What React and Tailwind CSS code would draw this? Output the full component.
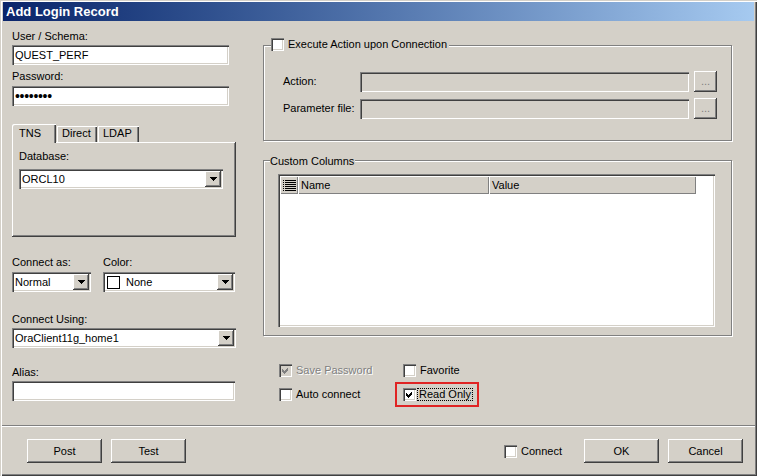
import React from 'react'

const sunken = 'shadow-[inset_1px_1px_0_#808080,inset_2px_2px_0_#404040,inset_-1px_-1px_0_#fff,inset_-2px_-2px_0_#d4d0c8]'
const raised = 'shadow-[inset_-1px_-1px_0_#404040,inset_1px_1px_0_#fff,inset_-2px_-2px_0_#808080]'

function Check({ checked, disabled }) {
  return (
    <div className={`w-[13px] h-[13px] shrink-0 ${disabled ? 'bg-[#d4d0c8]' : 'bg-white'} ${sunken}`}>
      {checked && (
        <svg width="13" height="13" viewBox="0 0 13 13" shapeRendering="crispEdges">
          <path d="M3 5 L5 7 L9 3 L9 6 L5 10 L3 8 Z" fill={disabled ? '#808080' : '#000'} />
        </svg>
      )}
    </div>
  )
}

function Arrow() {
  return (
    <div className={`w-[16px] h-[16px] shrink-0 bg-[#d4d0c8] flex items-center justify-center ${raised}`}>
      <svg width="7" height="4" viewBox="0 0 7 4" shapeRendering="crispEdges">
        <path d="M0 0 H7 V1 H6 V2 H5 V3 H4 V4 H3 V3 H2 V2 H1 V1 H0 Z" fill="#000" />
      </svg>
    </div>
  )
}

function Combo({ className = '', children }) {
  return (
    <div className={`flex items-center h-[20px] bg-white pl-[3px] pr-[2px] ${sunken} ${className}`}>
      <div className="flex-1 flex items-center whitespace-nowrap">{children}</div>
      <Arrow />
    </div>
  )
}

function Btn({ className = '', children }) {
  return (
    <div className={`h-[24px] w-[75px] flex items-center justify-center bg-[#d4d0c8] ${raised} ${className}`}>
      {children}
    </div>
  )
}

export default function App() {
  return (
    <div className="w-[757px] h-[476px] bg-[#d4d0c8] flex flex-col overflow-hidden text-[11px] leading-[13px] text-black font-[family-name:Liberation_Sans,Arial,sans-serif] shadow-[inset_1px_1px_0_#d4d0c8,inset_2px_2px_0_#fff,inset_-1px_-1px_0_#404040,inset_-2px_-2px_0_#808080]">
      {/* title bar */}
      <div className="mx-[3px] mt-[2px] h-[19px] flex items-center pl-[3px] bg-linear-to-r from-[#0a246a] to-[#a6caf0] text-white font-bold text-[13px] leading-[15px]">
        Add Login Record
      </div>

      <div className="flex h-[404px] pl-[12px]">
        {/* left column */}
        <div className="w-[224px] flex flex-col">
          <div className="mt-[9px]">User / Schema:</div>
          <div className={`mt-[2px] w-[217px] h-[20px] bg-white flex items-center pl-[3px] ${sunken}`}>QUEST_PERF</div>
          <div className="mt-[5px]">Password:</div>
          <div className={`mt-[3px] w-[217px] h-[20px] bg-white flex items-center pl-[3px] text-[14px] tracking-[-0.3px] ${sunken}`}>••••••••</div>

          <div className="mt-[18px] h-[18px] flex items-end">
            <div className="relative z-10 -mb-px w-[44px] h-[19px] pl-[7px] pt-[3px] bg-[#d4d0c8] shadow-[inset_1px_1px_0_#fff,inset_-1px_0_0_#404040,inset_-2px_0_0_#808080] rounded-tl-[2px]">TNS</div>
            <div className="w-[40px] h-[16px] ml-[1px] pl-[5px] pt-[1px] shadow-[inset_1px_1px_0_#fff,inset_-1px_0_0_#404040,inset_-2px_0_0_#808080]">Direct</div>
            <div className="w-[41px] h-[16px] ml-[1px] pl-[5px] pt-[1px] shadow-[inset_1px_1px_0_#fff,inset_-1px_0_0_#404040,inset_-2px_0_0_#808080]">LDAP</div>
          </div>
          <div className={`h-[95px] w-[224px] flex flex-col px-[7px] ${raised}`}>
            <div className="mt-[8px]">Database:</div>
            <Combo className="mt-[6px] w-[204px]">ORCL10</Combo>
          </div>

          <div className="mt-[19px] flex">
            <div className="w-[91px]">Connect as:</div>
            <div>Color:</div>
          </div>
          <div className="mt-[3px] flex">
            <Combo className="w-[79px]">Normal</Combo>
            <Combo className="ml-[12px] w-[132px]">
              <div className="w-[13px] h-[13px] border border-black bg-white ml-px" />
              <span className="ml-[6px]">None</span>
            </Combo>
          </div>

          <div className="mt-[21px]">Connect Using:</div>
          <Combo className="mt-[2px] w-[224px]">OraClient11g_home1</Combo>

          <div className="mt-[18px]">Alias:</div>
          <div className={`mt-[2px] w-[223px] h-[20px] bg-white ${sunken}`} />
        </div>

        {/* right column */}
        <div className="ml-[27px] w-[469px] flex flex-col">
          <div className="mt-[24px] h-[96px] border border-[#808080] shadow-[1px_1px_0_#fff,inset_1px_1px_0_#fff] flex flex-col">
            <div className="-mt-[8px] ml-[7px] self-start h-[13px] flex items-center bg-[#d4d0c8] pr-[2px]">
              <Check />
              <span className="ml-[4px]">Execute Action upon Connection</span>
            </div>
            <div className="mt-[20px] flex items-center h-[21px]">
              <div className="w-[96px] pl-[19px]">Action:</div>
              <div className={`w-[329px] h-[20px] bg-[#d4d0c8] ${sunken}`} />
              <div className={`ml-[5px] w-[23px] h-[21px] flex items-center justify-center text-[#808080] bg-[#d4d0c8] ${raised}`}>...</div>
            </div>
            <div className="mt-[6px] flex items-center h-[21px]">
              <div className="w-[96px] pl-[19px]">Parameter file:</div>
              <div className={`w-[329px] h-[20px] bg-[#d4d0c8] ${sunken}`} />
              <div className={`ml-[5px] w-[23px] h-[21px] flex items-center justify-center text-[#808080] bg-[#d4d0c8] ${raised}`}>...</div>
            </div>
          </div>

          <div className="mt-[19px] h-[176px] border border-[#808080] shadow-[1px_1px_0_#fff,inset_1px_1px_0_#fff] flex flex-col">
            <div className="-mt-[6px] ml-[6px] self-start bg-[#d4d0c8] pr-[1px]">Custom Columns</div>
            <div className={`mt-[6px] ml-[14px] w-[437px] h-[153px] bg-white p-[2px] ${sunken}`}>
              <div className="flex h-[18px]">
                <div className="w-[18px] flex items-center justify-center bg-[#d4d0c8] shadow-[inset_1px_1px_0_#fff,inset_-1px_-1px_0_#808080]">
                  <svg width="13" height="11" viewBox="0 0 13 11" shapeRendering="crispEdges">
                    <rect x="0" y="0" width="1" height="1" fill="#000" />
                    <rect x="0" y="2" width="1" height="1" fill="#000" />
                    <rect x="0" y="4" width="1" height="1" fill="#000" />
                    <rect x="0" y="6" width="1" height="1" fill="#000" />
                    <rect x="0" y="8" width="1" height="1" fill="#000" />
                    <rect x="0" y="10" width="1" height="1" fill="#000" />
                    <rect x="2" y="0" width="11" height="1" fill="#000" />
                    <rect x="2" y="2" width="11" height="1" fill="#000" />
                    <rect x="2" y="4" width="11" height="1" fill="#000" />
                    <rect x="2" y="6" width="11" height="1" fill="#000" />
                    <rect x="2" y="8" width="11" height="1" fill="#000" />
                    <rect x="2" y="10" width="11" height="1" fill="#000" />
                  </svg>
                </div>
                <div className="w-[191px] flex items-center pl-[3px] bg-[#d4d0c8] shadow-[inset_1px_1px_0_#fff,inset_-1px_-1px_0_#808080]">Name</div>
                <div className="w-[207px] flex items-center pl-[3px] bg-[#d4d0c8] shadow-[inset_1px_1px_0_#fff,inset_-1px_-1px_0_#808080]">Value</div>
              </div>
            </div>
          </div>

          <div className="mt-[28px] flex items-center h-[13px] pl-[16px]">
            <div className="w-[124px] flex items-center">
              <Check checked disabled />
              <span className="ml-[4px] text-[#808080] [text-shadow:1px_1px_0_#fff]">Save Password</span>
            </div>
            <div className="flex items-center">
              <Check />
              <span className="ml-[4px]">Favorite</span>
            </div>
          </div>
          <div className="mt-[11px] flex items-center h-[13px] pl-[16px]">
            <div className="w-[124px] flex items-center">
              <Check />
              <span className="ml-[4px]">Auto connect</span>
            </div>
            <div className="-ml-[8px] -my-[6px] w-[84px] h-[25px] border-2 border-[#e02424] pl-[6px] flex items-center">
              <Check checked />
              <span className="ml-[2px] px-px leading-[11px] outline outline-1 outline-dotted outline-black">Read Only</span>
            </div>
          </div>
        </div>
      </div>

      {/* separator */}
      <div className="mx-[2px] h-px bg-[#808080]" />
      <div className="mx-[2px] h-px bg-white" />

      {/* footer */}
      <div className="mt-[12px] flex items-center pl-[27px]">
        <Btn>Post</Btn>
        <Btn className="ml-[9px]">Test</Btn>
        <div className="ml-[318px] w-[80px] flex items-center">
          <Check />
          <span className="ml-[4px]">Connect</span>
        </div>
        <Btn>OK</Btn>
        <Btn className="ml-[9px]">Cancel</Btn>
      </div>
    </div>
  )
}
